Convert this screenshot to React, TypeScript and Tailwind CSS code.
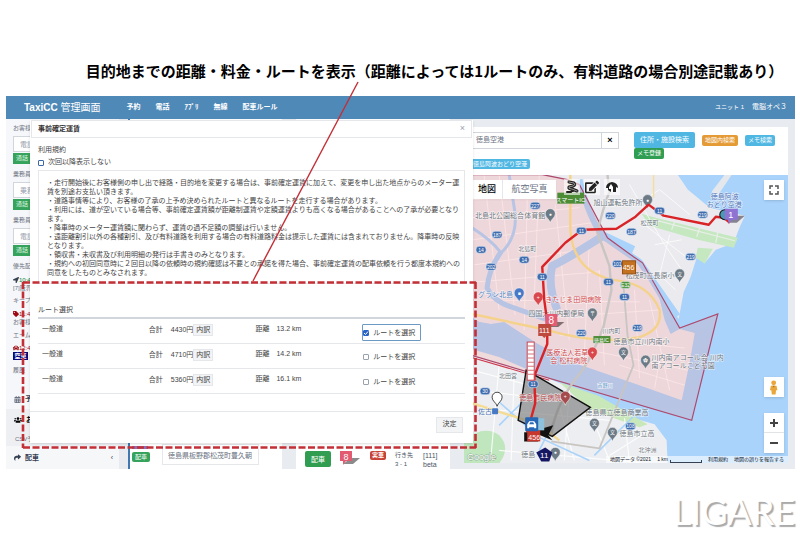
// App.tsx
import type { ReactNode } from "react";
import {
  FaCalendarAlt,
  FaCar,
  FaEdit,
  FaLocationArrow,
  FaShare,
  FaTag,
  FaUsers,
} from "react-icons/fa";

const navItems = ["予約", "電話", "ｱﾌﾟﾘ", "無線", "配車ルール"];

const terms = [
  "・走行開始後にお客様側の申し出で経路・目的地を変更する場合は、事前確定運賃に加えて、変更を申し出た地点からのメーター運",
  "賃を別途お支払い頂きます。",
  "・道路事情等により、お客様の了承の上予め決められたルートと異なるルートを走行する場合があります。",
  "・利用には、道が空いている場合等、事前確定運賃額が距離制運賃や定額運賃よりも高くなる場合があることへの了承が必要となり",
  "ます。",
  "・降車時のメーター運賃額に関わらず、運賃の過不足額の調整は行いません。",
  "・遠距離割引以外の各種割引、及び有料道路を利用する場合の有料道路料金は提示した運賃には含まれておりません。降車時の反映",
  "となります。",
  "・領収書・未収書及び利用明細の発行は手書きのみとなります。",
  "・規約への初回同意時に２回目以降の依頼時の規約確認は不要との承諾を得た場合、事前確定運賃の配車依頼を行う都度本規約への",
  "同意をしたものとみなされます。",
];

const routes = [
  { fare: "4430円", distance: "13.2 km", selected: true },
  { fare: "4710円", distance: "14.2 km", selected: false },
  { fare: "5360円", distance: "16.1 km", selected: false },
];

function Header() {
  return (
    <header className="flex h-[23px] items-center bg-[#4f89b7] pl-[18px] pr-2 text-white">
      <h2 className="text-[10px] whitespace-nowrap">
        <span className="font-bold">TaxiCC</span> 管理画面
      </h2>
      <nav className="ml-[26px] flex gap-[15px] text-[7px] font-bold">
        {navItems.map((item) => (
          <a key={item} href="#" className="whitespace-nowrap">
            {item}
          </a>
        ))}
      </nav>
      <div className="ml-auto flex items-center gap-2 whitespace-nowrap">
        <span className="text-[6px]">ユニット 1</span>
        <span className="text-[7px]">電脳オペ３</span>
      </div>
    </header>
  );
}

function CallField({ label, placeholder }: { label: string; placeholder: string }) {
  return (
    <div className="h-[46px]">
      <label className="block h-[14px] leading-[14px]">
        {label}
        <input
          placeholder={placeholder}
          className="mt-px block h-4 w-[90px] border border-gray-300 bg-white px-[6px] text-[7px] placeholder:text-gray-400"
        />
      </label>
      <button className="mt-[18px] block h-[11px] w-[30px] bg-[#36a35c] pl-[3px] text-left text-[6px] leading-[11px] text-[#d8f3df]">
        通話
      </button>
    </div>
  );
}

function Sidebar() {
  return (
    <aside className="w-[113px] shrink-0 bg-[#f6f7fa] text-[6px] leading-[8px] whitespace-nowrap text-gray-500">
      <div className="pl-[7px] pt-[2px]">
        <CallField label="お客様" placeholder="電話" />
        <CallField label="乗務員" placeholder="乗務" />
        <CallField label="乗務員" placeholder="電話" />
        <p className="mt-[3px]">優先配</p>
        <p className="mt-[6px] flex items-center text-green-700">
          <FaLocationArrow className="text-gray-700" /> 10:4
        </p>
        <p>[7]阪界</p>
        <p className="mt-1">キープ</p>
        <p className="mt-[6px] flex items-center text-red-800">
          <FaTag /> 11:4
        </p>
        <p>お客様</p>
        <p className="mt-[5px]">エーム</p>
        <p className="mt-[5px] flex items-center text-red-800">
          <FaCar /> 12:4
        </p>
        <span className="block w-[15px] bg-[#08087c] text-center font-bold text-white">空車</span>
        <p className="mt-[6px]">履歴</p>
      </div>
      <a href="#" className="mt-[15px] flex h-5 items-center gap-1 pl-2 text-[7px] font-bold text-gray-700">
        <FaCalendarAlt className="text-gray-500" /> 予約
      </a>
      <a href="#" className="flex h-[22px] items-center gap-1 bg-[#eeeff2] pl-2 text-[7px] font-bold text-black">
        <FaUsers className="size-2" /> お客
      </a>
      <a href="#" className="flex h-[15px] items-center bg-[#eeeff2] pl-[9px]">
        CSV予
      </a>
      <a href="#" className="flex h-[23px] items-center gap-1 bg-[#f6f7f9] pl-2 text-[7px] font-bold text-gray-700">
        <FaShare /> 配車 <span className="ml-auto pr-1.5 font-normal">‹</span>
      </a>
    </aside>
  );
}

function FlagMark() {
  return (
    <svg viewBox="0 0 20 14" className="h-[14px] w-5">
      <path d="M11 7h9l-7 6H3z" fill="#8b8b8b" />
      <path d="M0 0h12v10H6l-3 4v-4H0z" fill="#e25b70" />
      <text x="6" y="9" fontSize="9" textAnchor="middle" fill="#fff">8</text>
    </svg>
  );
}

function DispatchColumns() {
  return (
    <>
      <section className="ml-[9px] flex w-[154px] shrink-0 flex-col justify-end border-l-2 border-[#3f78b0] bg-white">
        <div className="flex items-end gap-3 pb-1 pl-[2px]">
          <div className="mb-[6px]">
            <div className="h-[3px] w-4 bg-[#8a73bd]" />
            <button className="mt-[3px] -mb-[3px] block h-[10px] w-[18px] rounded-xs bg-[#36a35c] text-[6px] leading-[10px] text-white">
              配車
            </button>
          </div>
          <input
            aria-label="住所"
            defaultValue="徳島県板野郡松茂町豊久朝"
            className="h-[21px] w-[97px] border border-gray-200 px-[5px] text-[7px] text-gray-500"
          />
        </div>
      </section>
      <section className="ml-[14px] flex w-[154px] shrink-0 flex-col justify-end bg-white">
        <div className="flex h-[18px] items-start pl-[9px] text-[7px] leading-[9px] whitespace-nowrap text-gray-600">
          <button className="h-4 w-[26px] rounded-xs bg-[#319d50] text-white">配車</button>
          <span className="ml-[9px]">
            <FlagMark />
          </span>
          <span className="ml-[10px] w-4 rounded-xs bg-[#c84236] text-center text-[6px] font-bold text-white">実車</span>
          <span className="ml-[9px] w-7 text-[6px] leading-[9px]">
            行き先
            <br />3 - 1
          </span>
          <span>
            [111]
            <br />
            beta
          </span>
        </div>
      </section>
    </>
  );
}

function Label({ x, y, size = 7, fill = "#6e7780", children }: { x: number; y: number; size?: number; fill?: string; children: ReactNode }) {
  return (
    <text x={x} y={y} fontSize={size} fill={fill} stroke="#fff" strokeWidth="1.2" strokeOpacity=".7" paintOrder="stroke">
      {children}
    </text>
  );
}

function RoadBadge({ x, y, n, fill = "#3f6cae" }: { x: number; y: number; n: string; fill?: string }) {
  return (
    <g>
      <rect x={x - 5} y={y - 3.5} width="10" height="7" rx="3" fill={fill} stroke="#dbe7f5" strokeWidth=".6" />
      <text x={x} y={y + 2} fontSize="5" textAnchor="middle" fill="#fff">{n}</text>
    </g>
  );
}

function Pin({ x, y, fill = "#6c7a86", mark = "●" }: { x: number; y: number; fill?: string; mark?: string }) {
  return (
    <g>
      <path d={`M${x} ${y + 9}c-1-4-5-5-5-9a5 5 0 0 1 10 0c0 4-4 5-5 9z`} fill={fill} stroke="#fff" strokeWidth=".5" />
      <text x={x} y={y + 2} fontSize="5" textAnchor="middle" fill="#fff">{mark}</text>
    </g>
  );
}

function MapDrawing() {
  const zone = "465,175 543,175 568,180 580,185 608,238 634,257 643,263 680,328 718,314 692,420 465,353";
  return (
    <svg
      viewBox="465 175 323 288"
      preserveAspectRatio="xMidYMid slice"
      className="absolute inset-0 size-full font-['Liberation_Sans','Noto_Sans_CJK_JP',sans-serif]"
    >
      <rect x="465" y="175" width="323" height="288" fill="#a9d3fb" />
      {/* mainland, airport island and south bank */}
      <path d="M465 175H678L688 190 710 208 745 216 740 227 735 240 727 246 716 250 706 262 697 258 691 277 684 292 679 319 667 300 666 294 645 268 640 265 660 299 665 320 671 334 680 329 695 333 690 362 682 400 637 384 573 362 537 343 505 322 485 325 465 312z" fill="#ebebef" />
      <path d="M465 347L500 357 530 370 563 384 590 404 620 414 655 424 667 440 668 463H465z" fill="#eceef1" />
      <path d="M712 192L725 175H732L718 196z" fill="#e4e8ed" />
      <path d="M642 214L656 218 738 238 734 248 698 240 650 226z" fill="#c5e8c1" />
      <path d="M654 220L735 241M675 222L672 230M700 228L697 237M718 233L716 243" fill="none" stroke="#e9eee9" strokeWidth="1.2" />
      <path d="M698 248L713 249 705 264 696 258z" fill="#c5e8c1" />
      <path d="M560 382L600 396 648 424 640 427 590 409z" fill="#c9e8b9" />
      <path d="M465 440Q485 424 500 435 512 447 500 463H465z" fill="#bfe6bd" />
      {/* minor streets */}
      <g fill="none" stroke="#fff" strokeWidth=".9" opacity=".85">
        <path d="M485 175L500 310M500 175L516 315M528 200L525 330M540 175L535 300M556 205L570 340M590 240L585 355M600 270L605 365M635 290L640 378M650 300L670 390M660 360L655 388" />
        <path d="M474 200L600 190M473 218L580 208M474 240L600 222M475 265L585 250M478 282L600 272M478 300L640 302M540 318L660 310M560 335L685 348M590 350L688 370M620 365L685 385" />
        <path d="M630 185L665 245 682 270M645 225L690 260M655 245L682 240M670 235L660 275 676 290M637 205L660 190 690 215" />
        <path d="M473 370L530 385M475 390L560 400M480 408L610 420M500 450L640 462M500 365L492 455M515 375L512 460M560 405L575 460M590 410L610 460M625 418L630 462M650 430L610 455M570 390L565 460" strokeWidth="1.2" />
      </g>
      {/* rivers */}
      <g fill="none" stroke="#a9d3fb" strokeLinejoin="round">
        <path d="M473 228Q492 240 502 253 518 238 516 214L510 175" strokeWidth="3" />
        <path d="M502 252Q490 268 488 288 494 301 512 307L558 323" strokeWidth="5" />
        <path d="M634 250L604 236Q570 258 553 266 548 285 558 310" strokeWidth="8" />
        <path d="M580 180Q590 220 604 237L640 262 678 316" strokeWidth="6" />
        <path d="M465 330Q495 328 535 352" strokeWidth="17" />
        <path d="M498 400L540 437 590 460M595 455L650 400M555 420L540 450M530 395L500 425" strokeWidth="1.6" />
      </g>
      <polygon points={zone} fill="#ff8080" fillOpacity=".18" stroke="#ad496d" strokeWidth="1.2" />
      {/* highways */}
      <g fill="none" strokeWidth="2.4" strokeLinejoin="round">
        <path d="M571 175V230Q574 275 620 281 650 285 660 310 663 330 640 337 600 345 548 330L473 314" stroke="#f5d28b" />
        <path d="M654 175V198" stroke="#f2dea2" strokeWidth="1.5" />
        <path d="M608 175L610 192Q603 210 598 233L610 266 612 290 604 327Q593 356 583 370 556 402 552 435" stroke="#c9c5c2" />
        <path d="M624 286L628 335 634 365 600 448 552 441" stroke="#c9c5c2" strokeWidth="1.8" />
        <path d="M473 403L540 424 560 440" stroke="#f4dc94" />
        <path d="M465 355L550 380" stroke="#cf3449" strokeWidth="1" />
      </g>
      <Label x={476} y={218}>北島北公園総合体育館</Label>
      <Pin x={551} y={214} />
      <Label x={594} y={205}>旭山運転免許所</Label>
      <Pin x={648} y={200} />
      <Label x={519} y={251} size={6}>北島町</Label>
      <Label x={641} y={225} size={6}>松茂町</Label>
      <Label x={711} y={199} fill="#5575b5">徳島阿波</Label>
      <Label x={707} y={207} fill="#5575b5">おどり空港</Label>
      <Label x={626} y={278}>松茂町立長原小</Label>
      <Pin x={680} y={274} mark="文" />
      <Label x={479} y={297} fill="#5587bf">グラン北島</Label>
      <Pin x={520} y={293} fill="#4779c6" mark="■" />
      <Label x={546} y={302} fill="#d0484b">きたじま田岡病院</Label>
      <Pin x={539} y={297} fill="#d9484c" mark="+" />
      <Label x={529} y={316}>四国大川内郵便局</Label>
      <Pin x={593} y={313} mark="〒" />
      <Label x={603} y={333} size={6}>川内町</Label>
      <Label x={614} y={344}>徳島市立川内南小</Label>
      <Pin x={624} y={352} mark="文" />
      <Label x={652} y={360}>川内南アコール会 川内</Label>
      <Label x={652} y={368}>南アコールこども園</Label>
      <Pin x={646} y={360} mark="✿" />
      <Label x={547} y={355} fill="#cd4c50">医療法人若草</Label>
      <Label x={551} y={363} fill="#cd4c50">会 松村病院</Label>
      <Pin x={593} y={352} fill="#d9484c" mark="+" />
      <Label x={500} y={378} size={6}>北田宮</Label>
      <Label x={598} y={387} size={5} fill="#679bcc">吉野川</Label>
      <Label x={479} y={414} fill="#5076b8">佐古</Label>
      <rect x="493" y="408" width="6" height="6" rx="1" fill="#4779c6" />
      <Label x={586} y={415}>徳島県立徳島商業高</Label>
      <Pin x={595} y={423} mark="文" />
      <Label x={620} y={436}>徳島市立高</Label>
      <Pin x={613} y={432} mark="文" />
      <Label x={639} y={452} size={6}>北沖洲</Label>
      <Label x={522} y={457}>徳島</Label>
      <Pin x={556} y={452} />
      <RoadBadge x={536} y={206} n="227" />
      <RoadBadge x={611} y={216} n="220" />
      <RoadBadge x={498} y={235} n="187" />
      <RoadBadge x={482} y={250} n="14" />
      <RoadBadge x={525} y={260} n="14" />
      <RoadBadge x={492} y={267} n="202" />
      <RoadBadge x={632} y={232} n="187" />
      <RoadBadge x={703} y={215} n="219" />
      <RoadBadge x={691} y={257} n="219" />
      <RoadBadge x={638} y={328} n="219" />
      <RoadBadge x={582} y={333} n="220" />
      <RoadBadge x={618} y={264} n="101" />
      <RoadBadge x={609} y={282} n="11" />
      <RoadBadge x={625} y={297} n="11" />
      <RoadBadge x={486} y={391} n="30" />
      <RoadBadge x={631} y={426} n="108" />
      <RoadBadge x={626} y={285} n="E32" fill="#4e963f" />
      <rect x="594" y="336" width="17" height="7" fill="#4c8c37" />
      <text x="602" y="342" fontSize="5" textAnchor="middle" fill="#fff">徳島IC</text>
      <rect x="558" y="193" width="27" height="11" fill="#4c8c37" />
      <text x="571" y="202" fontSize="6" textAnchor="middle" fill="#fff">スマートIC</text>

      {/* service area and selected route */}
      <polygon points="527,370 591,407 553,436 519,420" fill="#777" fillOpacity=".62" stroke="#111" strokeWidth="1.4" />
      <Label x={520} y={400} fill="#b4474b">徳島市民病院</Label>
      <Pin x={566} y={396} fill="#a64b4d" mark="+" />
      <path d="M730 223L724 218 716 217 709 225 664 216 649 205 636 217 617 229 583 230 566 243 543 267 545 300 548 322V344L535 376 536 403 528 432" fill="none" stroke="#d92327" strokeWidth="2.4" strokeLinejoin="round" />
      <RoadBadge x={582} y={231} n="11" />
      <RoadBadge x={543} y={277} n="11" />
      <RoadBadge x={534} y={384} n="11" />
      <RoadBadge x={660} y={211} n="11" />
      <g fontFamily="Liberation Sans" textAnchor="middle" fill="#fff">
        <path d="M731 216h14l-8 7h-8z" fill="#858390" />
        <circle cx="725" cy="215" r="5" fill="#4b97b6" stroke="#111" />
        <path d="M725 209h13v11h-6l-3 4-1-4h-3z" fill="#8f73d3" />
        <text x="731" y="218" fontSize="9">1</text>
        <path d="M556 322h9l-6 5h-8z" fill="#81706f" />
        <rect x="546" y="314" width="12" height="12" fill="#e45b74" />
        <text x="552" y="324" fontSize="10">8</text>
        <path d="M539 324h13v12h-5l-2 2-2-2h-4z" fill="#be4a3d" />
        <text x="545" y="333" fontSize="7">111</text>
        <rect x="623" y="261" width="13" height="13" fill="#c57220" stroke="#975114" />
        <text x="629" y="270" fontSize="7">456</text>
        <rect x="528" y="342" width="7" height="38" fill="#fff" stroke="#ce4550" />
        <path d="M528 346h7M528 350h7M528 354h7M528 358h7M528 362h7M528 366h7M528 370h7M528 374h7" stroke="#d67078" />
        <path d="M525 432h14v9h-14zM537 430l17-5-5 10 4 5-12-5z" fill="#111" />
        <rect x="528" y="430" width="13" height="11" fill="#c9372c" />
        <text x="535" y="440" fontSize="7">456</text>
        <rect x="538" y="418" width="7" height="12" fill="#8ec1db" />
        <rect x="526" y="417" width="13" height="14" rx="1" fill="#2666b5" />
        <path d="M528 424l2-3h5l2 3v4h-2v-1h-5v1h-2z" fill="#fff" />
        <path d="M530 424l1-2h3l1 2z" fill="#2666b5" />
        <path d="M546 447l7 5-3 9h-8l-5-9z" fill="#151763" />
        <text x="545" y="458" fontSize="8">11</text>
      </g>
      <path d="M498 406c-1-4-5-5-5-9a5 5 0 0 1 10 0c0 4-4 5-5 9z" fill="#fff" stroke="#333" strokeWidth=".9" />
      <text x="468" y="460" fontSize="9" fill="#fff" stroke="#8ba994" strokeWidth="1" paintOrder="stroke">Google</text>
    </svg>
  );
}

function MapControls() {
  return (
    <>
      <div className="absolute top-[5px] left-2 flex h-[19px] bg-white text-[9px] text-gray-500 shadow-xs">
        <button className="w-[31px] border-r border-gray-200 font-medium text-black">地図</button>
        <button className="w-[53px]">航空写真</button>
      </div>
      <div className="absolute top-[4px] left-[100px] flex gap-1 text-[#222]">
        <button aria-label="ルート" className="bg-white/60 p-px">
          <svg viewBox="0 0 14 14" className="size-[14px]" fill="none" strokeLinecap="round" strokeLinejoin="round">
            <path d="M4 2L9 3Q11 5 8 6L4 7Q3 9 7 9L12 11" stroke="#222" strokeWidth="3" />
            <path d="M2 12L6 12Q7 10 8 11" stroke="#222" strokeWidth="2" />
            <path d="M4 2L9 3Q11 5 8 6L4 7Q3 9 7 9L12 11" stroke="#fff" strokeWidth=".5" />
          </svg>
        </button>
        <button aria-label="編集" className="bg-white/60 p-px">
          <FaEdit className="size-[14px]" />
        </button>
        <button aria-label="施設" className="bg-white/60 p-px">
          <svg viewBox="0 0 14 14" className="size-[14px]" fill="currentColor">
            <path d="M1 8Q1 3 7 2q6 1 6 6l-2-1v5H8V9H6v3L3 10V8z" />
            <path d="M4 7l2-3 2 3v2H4z" fill="#fff" />
          </svg>
        </button>
      </div>
      <button aria-label="全画面" className="absolute top-[5px] right-1 flex size-5 items-center justify-center bg-white shadow">
        <svg viewBox="0 0 10 10" className="size-[10px]" fill="none" stroke="#555" strokeWidth="1.5">
          <path d="M1 4V1h3M6 1h3v3M9 6v3H6M4 9H1V6" />
        </svg>
      </button>
      <div className="absolute right-1 bottom-[10px] flex w-5 flex-col">
        <button aria-label="ストリートビュー" className="mb-4 flex h-5 items-center justify-center bg-white shadow">
          <svg viewBox="0 0 10 16" className="h-[15px]" fill="#e9a63a">
            <circle cx="5" cy="3" r="2.6" />
            <path d="M2 6h6l1 5H7.500l-.5 4.500h-4L2.500 11H1z" />
            <path d="M3.500 6h3L5 8z" fill="#b97417" />
          </svg>
        </button>
        <button aria-label="拡大" className="flex h-5 items-center justify-center border-b border-gray-200 bg-white shadow">
          <svg viewBox="0 0 10 10" className="size-[10px]" stroke="#444" strokeWidth="2">
            <path d="M5 1v8M1 5h8" />
          </svg>
        </button>
        <button aria-label="縮小" className="flex h-5 items-center justify-center bg-white shadow">
          <svg viewBox="0 0 10 10" className="size-[10px]" stroke="#444" strokeWidth="2">
            <path d="M1 5h8" />
          </svg>
        </button>
      </div>
      <div className="absolute right-0 bottom-0 flex h-[7px] items-center gap-[6px] bg-white/60 pr-1 pl-1 text-[5px] whitespace-nowrap text-gray-900">
        <span>地図データ ©2021</span>
        <span className="flex items-end gap-[2px]">
          1 km <i className="block h-[3px] w-8 border-x border-b border-gray-700" />
        </span>
        <a href="#">利用規約</a>
        <a href="#">地図の誤りを報告する</a>
      </div>
    </>
  );
}

function MapPanel() {
  return (
    <section className="ml-[14px] flex min-w-0 flex-1 flex-col pt-2 pr-[7px] pb-[6px]">
      <div className="flex h-12 shrink-0 bg-white pt-[5px] text-[6px] whitespace-nowrap text-white">
        <div>
          <div className="flex h-[17px] border border-gray-300 text-[7px] text-gray-500">
            <input aria-label="目的地" defaultValue="徳島空港" className="w-[136px] pl-[11px]" />
            <button aria-label="クリア" className="w-[17px] border-l border-gray-300 text-[9px] font-bold text-black">
              ×
            </button>
          </div>
          <button className="mt-[10px] h-[10px] rounded-xs bg-[#50b7e3] pr-[3px] pl-[9px] leading-[10px]">徳島阿波おどり空港</button>
        </div>
        <div className="ml-[15px]">
          <div className="flex items-center gap-[7px]">
            <button className="h-4 w-[61px] rounded-xs bg-[#50b7e3] text-[7px]">住所・施設検索</button>
            <button className="h-[11px] w-[36px] rounded-xs bg-[#e49a35]">地図内検索</button>
            <button className="h-[11px] w-[30px] rounded-xs bg-[#50b7e3]">メモ検索</button>
          </div>
          <button className="block h-[11px] w-[30px] rounded-xs bg-[#2f9e53]">メモ登録</button>
        </div>
      </div>
      <div className="relative min-h-0 flex-1 overflow-hidden">
        <MapDrawing />
        <MapControls />
      </div>
    </section>
  );
}

function RouteCheck({ selected }: { selected: boolean }) {
  return (
    <label
      className={`mt-[5px] flex h-[17px] w-[59px] items-center gap-1 rounded-[1px] border ${
        selected ? "border-[#6d9ac5]" : "border-transparent"
      }`}
    >
      <span className="relative flex size-[6px]">
        <input
          type="checkbox"
          defaultChecked={selected}
          className="peer size-[6px] appearance-none rounded-[1px] border border-gray-400 bg-white checked:border-[#2a63c8] checked:bg-[#2a63c8]"
        />
        <svg
          viewBox="0 0 6 6"
          className="pointer-events-none absolute inset-0 hidden size-[6px] peer-checked:block"
          fill="none"
          stroke="#fff"
        >
          <path d="M1 3l1.500 1.500L5 1.500" />
        </svg>
      </span>
      ルートを選択
    </label>
  );
}

function FareDialog() {
  return (
    <div
      role="dialog"
      aria-label="事前確定運賃"
      className="absolute top-px left-6 flex w-[443px] flex-col bg-white text-[7px] whitespace-nowrap text-[#444] shadow-sm"
    >
      <div className="mx-px flex h-[18px] items-center justify-between border border-gray-200 px-[6px]">
        <h3 className="font-bold text-[#333]">事前確定運賃</h3>
        <button aria-label="閉じる" className="text-[9px] text-gray-400">
          ×
        </button>
      </div>
      <div className="px-2 pt-[6px]">
        <h4 className="leading-[11px]">利用規約</h4>
        <label className="flex h-[15px] items-center gap-1">
          <input type="checkbox" className="size-[6px] appearance-none rounded-[1px] border border-[#3d68a8] bg-white" />
          次回以降表示しない
        </label>
        <div className="h-[114px] border border-gray-200 pt-[7px] pl-2 leading-[9px]">
          {terms.map((line) => (
            <p key={line}>{line}</p>
          ))}
        </div>
        <h4 className="mt-5 h-[13px] leading-[11px]">ルート選択</h4>
        <table className="w-full table-fixed border-t-2 border-gray-300">
          <tbody>
            {routes.map((route) => (
              <tr key={route.fare} className="h-[25px] border-b border-gray-200 align-top leading-[10px]">
                <td className="pt-[5px] pl-1">一般道</td>
                <td className="pl-1">
                  <div className="mt-[5px] flex h-3 items-center">
                    <span className="mr-2">合計</span>
                    <span>{route.fare}</span>
                    <button className="h-3 w-5 border border-gray-200 bg-gray-100 leading-[10px]">内訳</button>
                  </div>
                </td>
                <td className="pt-[5px] pl-1">
                  距離 <span className="ml-[5px]">{route.distance}</span>
                </td>
                <td className="pl-1">
                  <RouteCheck selected={route.selected} />
                </td>
              </tr>
            ))}
          </tbody>
        </table>
      </div>
      <div className="mt-[17px] flex h-8 justify-end border-t border-gray-200 pt-[5px] pr-[10px]">
        <button className="h-4 w-[27px] border border-gray-200 bg-gray-100">決定</button>
      </div>
    </div>
  );
}

export default function App() {
  return (
    <main className="relative min-h-screen overflow-hidden bg-white pr-[5px] pl-[6px] font-['Liberation_Sans','Noto_Sans_CJK_JP',sans-serif]">
      <h1 className="pt-[60px] pb-[14px] pl-[68px] text-center font-['Noto_Sans_CJK_JP',sans-serif] text-[15px] leading-[22px] font-bold whitespace-nowrap text-black">
        目的地までの距離・料金・ルートを表示（距離によっては1ルートのみ、有料道路の場合別途記載あり）
      </h1>
      <div className="overflow-hidden">
        <Header />
        <div className="relative flex h-[350px] bg-[#e8ebf0]">
          <Sidebar />
          <DispatchColumns />
          <MapPanel />
          <FareDialog />
        </div>
      </div>
      <p className="pt-[20px] text-right font-[Lato] text-[36px] leading-[44px] text-white [text-shadow:2px_2px_1px_#aaa]">
        LIGARE
      </p>
      {/* callout line and dashed frame */}
      <svg viewBox="0 0 800 533" className="pointer-events-none absolute top-0 left-0 w-[800px]" fill="none" stroke="#c32f36">
        <path d="M358 82L253 281" strokeWidth="1.4" />
        <path d="M23 282.500H476M23 447.500H476" strokeWidth="2.400" strokeDasharray="7 2.500" />
        <path d="M23 282V448M475.500 282V448" strokeWidth="2.600" strokeDasharray="7 2.500" />
      </svg>
    </main>
  );
}
